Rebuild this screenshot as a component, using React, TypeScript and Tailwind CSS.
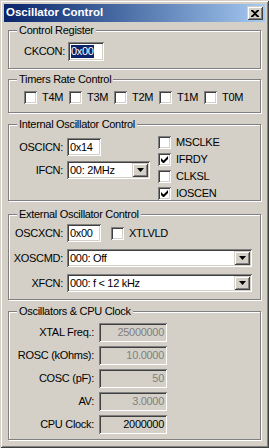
import React from "react";

// Win2k style "Oscillator Control" dialog
const SUNKEN =
  "shadow-[inset_1px_1px_0_#808080,inset_-1px_-1px_0_#ffffff,inset_2px_2px_0_#404040,inset_-2px_-2px_0_#d4d0c8]";
const RAISED =
  "shadow-[inset_1px_1px_0_#d4d0c8,inset_-1px_-1px_0_#404040,inset_2px_2px_0_#ffffff,inset_-2px_-2px_0_#808080]";

function Group({
  title,
  className,
  children,
}: {
  title: string;
  className: string;
  children: React.ReactNode;
}) {
  return (
    <fieldset
      className={`border border-[#808080] shadow-[1px_1px_0_#ffffff,inset_1px_1px_0_#ffffff] ${className}`}
    >
      <legend className="ml-[8px] bg-[#d4d0c8] px-[2px] leading-[13px]">{title}</legend>
      {children}
    </fieldset>
  );
}

function Check({ label, checked = false }: { label: string; checked?: boolean }) {
  return (
    <div className="flex items-center gap-[5px] whitespace-nowrap leading-[13px]">
      <div className={`flex h-[13px] w-[13px] shrink-0 items-center justify-center bg-white ${SUNKEN}`}>
        {checked && (
          <svg width="7" height="7" viewBox="0 0 7 7">
            <path d="M0 2v3l2 2h1l4-4V0L2.5 4.5z" fill="#000" />
          </svg>
        )}
      </div>
      <span>{label}</span>
    </div>
  );
}

function Edit({
  value,
  w,
  h = 18,
  selected = false,
}: {
  value: string;
  w: string;
  h?: number;
  selected?: boolean;
}) {
  return (
    <div className={`flex items-center bg-white px-[3px] leading-[13px] ${w} ${h === 19 ? "h-[19px]" : "h-[18px]"} ${SUNKEN}`}>
      {selected ? <span className="bg-[#0a246a] text-white">{value}</span> : value}
    </div>
  );
}

function Combo({ value, w }: { value: string; w: string }) {
  return (
    <div className={`flex h-[18px] items-center bg-white p-[2px] leading-[13px] ${w} ${SUNKEN}`}>
      <span className="flex-1 whitespace-nowrap pl-[1px]">{value}</span>
      <div className={`flex h-[14px] w-[16px] items-center justify-center bg-[#d4d0c8] ${RAISED}`}>
        <svg width="7" height="4" viewBox="0 0 7 4">
          <path d="M0 0h7L3.5 4z" fill="#000" />
        </svg>
      </div>
    </div>
  );
}

function Field({ label, value, disabled = true }: { label: string; value: string; disabled?: boolean }) {
  return (
    <div className="flex items-center">
      <span className="w-[86px] whitespace-nowrap pr-[1px] text-right">{label}</span>
      <div
        className={`ml-[4px] flex h-[19px] w-[68px] items-center justify-end bg-[#d4d0c8] pr-[3px] leading-[13px] ${SUNKEN} ${
          disabled ? "text-[#808080]" : "text-black"
        }`}
      >
        {value}
      </div>
    </div>
  );
}

export default function App() {
  return (
    <div
      className="flex h-[448px] w-[269px] flex-col bg-[#d4d0c8] p-[4px] font-['Liberation_Sans',Arial,sans-serif] text-[11px] tracking-[-0.3px] text-black shadow-[inset_1px_1px_0_#d4d0c8,inset_-1px_-1px_0_#404040,inset_2px_2px_0_#ffffff,inset_-2px_-2px_0_#808080]"
    >
      {/* Title bar */}
      <div className="flex h-[18px] shrink-0 items-center bg-gradient-to-r from-[#0a246a] to-[#a6caf0] pl-[2px] pr-[2px]">
        <span className="flex-1 text-[11.5px] font-bold tracking-normal text-white">Oscillator Control</span>
        <div className={`flex h-[14px] w-[16px] items-center justify-center bg-[#d4d0c8] ${RAISED}`}>
          <svg width="8" height="7" viewBox="0 0 8 7">
            <path d="M0 0h2l2 2 2-2h2v1L5 3.5 8 6v1H6L4 5 2 7H0V6l3-2.5L0 1z" fill="#000" />
          </svg>
        </div>
      </div>

      <div className="flex flex-1 flex-col px-[4px] whitespace-nowrap">
        {/* Control Register */}
        <Group title="Control Register" className="mt-[2px] h-[45px]">
          <div className="mt-[5px] flex items-center pl-[15px]">
            <span>CKCON:</span>
            <div className="ml-[3px]">
              <Edit value="0x00" w="w-[36px]" h={19} selected />
            </div>
          </div>
        </Group>

        {/* Timers */}
        <Group title="Timers Rate Control" className="mt-[4px] h-[40px]">
          <div className="mt-[5px] flex pl-[15px]">
            {["T4M", "T3M", "T2M", "T1M", "T0M"].map((t) => (
              <div key={t} className="w-[45px]">
                <Check label={t} />
              </div>
            ))}
          </div>
        </Group>

        {/* Internal oscillator */}
        <Group title="Internal Oscillator Control" className="mt-[5px] h-[83px]">
          <div className="flex">
            <div className="flex w-[141px] flex-col">
              <div className="mt-[7px] flex items-center">
                <span className="w-[54px] text-right">OSCICN:</span>
                <div className="ml-[4px]">
                  <Edit value="0x14" w="w-[34px]" />
                </div>
              </div>
              <div className="mt-[5px] flex items-center">
                <span className="w-[54px] text-right">IFCN:</span>
                <div className="ml-[4px]">
                  <Combo value="00: 2MHz" w="w-[83px]" />
                </div>
              </div>
            </div>
            <div className="ml-[8px] mt-[5px] flex flex-col gap-[4px]">
              <Check label="MSCLKE" />
              <Check label="IFRDY" checked />
              <Check label="CLKSL" />
              <Check label="IOSCEN" checked />
            </div>
          </div>
        </Group>

        {/* External oscillator */}
        <Group title="External Oscillator Control" className="mt-[7px] h-[92px]">
          <div className="mt-[3px] flex items-center">
            <span className="w-[54px] text-right">OSCXCN:</span>
            <div className="ml-[4px]">
              <Edit value="0x00" w="w-[34px]" />
            </div>
            <div className="ml-[10px]">
              <Check label="XTLVLD" />
            </div>
          </div>
          <div className="mt-[7px] flex items-center">
            <span className="w-[54px] text-right">XOSCMD:</span>
            <div className="ml-[4px]">
              <Combo value="000: Off" w="w-[185px]" />
            </div>
          </div>
          <div className="mt-[7px] flex items-center">
            <span className="w-[54px] text-right">XFCN:</span>
            <div className="ml-[4px]">
              <Combo value="000: f < 12 kHz" w="w-[185px]" />
            </div>
          </div>
        </Group>

        {/* Oscillators & CPU clock */}
        <Group title="Oscillators & CPU Clock" className="mt-[5px] h-[135px]">
          <div className="mt-[5px] flex flex-col gap-[4px]">
            <Field label="XTAL Freq.:" value="25000000" />
            <Field label="ROSC (kOhms):" value="10.0000" />
            <Field label="COSC (pF):" value="50" />
            <Field label="AV:" value="3.0000" />
            <Field label="CPU Clock:" value="2000000" disabled={false} />
          </div>
        </Group>
      </div>
    </div>
  );
}
